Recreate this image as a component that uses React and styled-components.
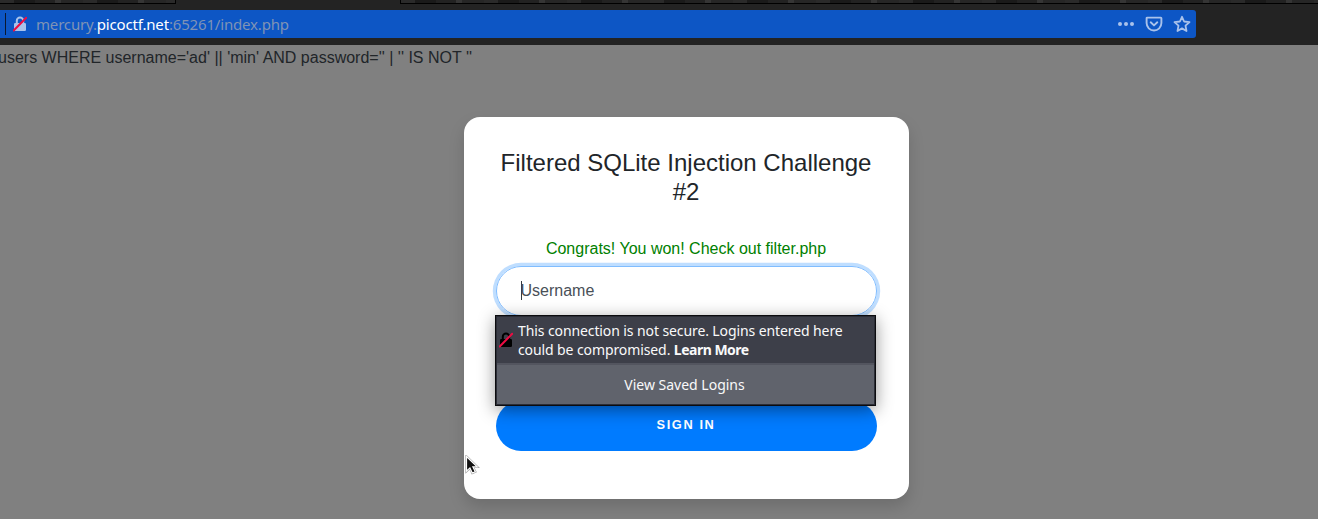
import React from "react";
import styled, { createGlobalStyle } from "styled-components";

const GlobalStyle = createGlobalStyle`
  * { box-sizing: border-box; }
  body {
    margin: 0;
    overflow: hidden;
    background: #808080;
    color: #212529;
    font: 16px/24px "Liberation Sans", Arial, sans-serif;
  }
  #root { height: 519px; }
`;

const Window = styled.div`
  height: 519px;
  display: flex;
  flex-direction: column;
  overflow: hidden;
`;

const TabStrip = styled.div`
  height: 4px;
  flex: none;
  display: flex;
  background: #232323;
`;

const TabGap = styled.div`
  width: ${(p) => p.$width};
  flex: ${(p) => (p.$grow ? 1 : "none")};
  border-bottom: 1px solid #000;
  border-left: ${(p) => (p.$grow ? "1px solid #000" : 0)};
  border-right: ${(p) => (p.$grow ? 0 : "1px solid #000")};
  background: repeating-linear-gradient(
    90deg,
    #2a2a2a 0 14px, #1a1a1a 14px 35px, #222 35px 55px,
    #353535 55px 61px, #262626 61px 83px
  );
`;

const ActiveTab = styled.div`
  width: 224px;
`;

const NavBar = styled.div`
  height: 41px;
  flex: none;
  padding: 6px 122px 7px 0;
  background: #232323;
`;

const UrlBar = styled.div`
  height: 28px;
  display: flex;
  align-items: center;
  padding-right: 5px;
  background: #0d56c5;
  border-radius: 0 3px 3px 0;
`;

const Divider = styled.div`
  width: 1px;
  height: 22px;
  margin: 0 7px 0 5px;
  background: #0b1830;
`;

const Url = styled.div`
  flex: 1;
  margin-left: 9px;
  font: 15px/20px "Noto Sans", sans-serif;
  letter-spacing: -0.17px;
  color: #7f93b5;
`;

const Host = styled.span`
  color: #fff;
`;

const Actions = styled.div`
  display: flex;
  gap: 10px;
  color: #a9c2eb;
`;

const Page = styled.main`
  flex: 1;
  display: flex;
  flex-direction: column;
  align-items: flex-start;
`;

const Query = styled.div`
  height: 25px;
  padding-top: 1px;
  margin-left: -2px;
  white-space: pre;
`;

const Card = styled.section`
  width: 445px;
  height: 382px;
  flex: none;
  margin: 47px 0 0 464px;
  padding: 32px;
  border-radius: 16px;
  background: #fff;
  box-shadow: 0 8px 16px rgba(0, 0, 0, 0.15);
  text-align: center;
`;

const Title = styled.h5`
  margin: 0 0 30px;
  padding-right: 1px;
  font-size: 24px;
  font-weight: 400;
  line-height: 28.8px;
`;

const Message = styled.div`
  height: 24px;
  margin-bottom: 5px;
  padding-right: 1px;
  color: green;
`;

const Field = styled.div`
  position: relative;
  height: 50px;
  display: flex;
  align-items: center;
  padding-left: 24px;
  border: 1px solid #80bdff;
  border-radius: 32px;
  box-shadow: 0 0 0 3.2px rgba(0, 123, 255, 0.25);
  color: #495057;
`;

const Caret = styled.span`
  width: 1px;
  height: 19px;
  margin-right: -1.5px;
  background: #343a40;
`;

const SignIn = styled.button`
  display: block;
  width: 100%;
  height: 50px;
  margin-top: 85px;
  padding: 0 1px 2px 0;
  border: 0;
  border-radius: 80px;
  background: #007bff;
  color: #fff;
  font: bold 12.8px/20px "Liberation Sans", Arial, sans-serif;
  letter-spacing: 1.6px;
`;

const LoginPopup = styled.div`
  position: absolute;
  z-index: 2;
  top: 48px;
  left: -2px;
  width: 381px;
  height: 91px;
  border: 1px solid #0c0c0f;
  box-shadow: 0 4px 16px rgba(0, 0, 0, 0.42);
  background: #2b2d36;
  padding: 1px;
  color: #f9f9fa;
  font: 14px/19px "Noto Sans", sans-serif;
`;

const Warning = styled.div`
  height: 46px;
  display: flex;
  align-items: center;
  padding-left: 2px;
  gap: 5px;
  background: #3d3f49;
  text-align: left;
  white-space: nowrap;
  letter-spacing: -0.1px;
`;

const LearnMore = styled.b`
  letter-spacing: -0.5px;
`;

const SavedLogins = styled.div`
  height: 41px;
  padding-right: 2px;
  border-top: 2px solid #53555f;
  background: #60636c;
  line-height: 40px;
  text-align: center;
`;

const Pointer = styled.svg`
  position: absolute;
  left: 465px;
  top: 455px;
`;

const LockIcon = ({ color }) => (
  <svg width="14" height="16" viewBox="0 0 14 16" fill="none">
    <path d="M3.8 7.5V4.8a3.2 3.2 0 0 1 6.4 0v2.7" stroke={color} strokeWidth="2" />
    <rect x="1" y="7" width="12" height="8" rx="1.2" fill={color} />
    <path d="M.7 14.5 13.2 1.8" stroke="#ed0d43" strokeWidth="2" strokeLinecap="round" />
  </svg>
);

export default function App() {
  return (
    <>
      <GlobalStyle />
      <Window>
        <TabStrip>
          <TabGap $width="176px" />
          <ActiveTab />
          <TabGap $grow />
        </TabStrip>
        <NavBar>
          <UrlBar>
            <Divider />
            <LockIcon color="#a9c2eb" />
            <Url>mercury.<Host>picoctf.net</Host>:65261/index.php</Url>
            <Actions>
              <svg width="18" height="18" viewBox="0 0 18 18" fill="currentColor">
                <circle cx="3" cy="9" r="2" />
                <circle cx="9" cy="9" r="2" />
                <circle cx="15" cy="9" r="2" />
              </svg>
              <svg width="18" height="18" viewBox="0 0 18 18" fill="none" stroke="currentColor" strokeWidth="1.9" strokeLinecap="round" strokeLinejoin="round">
                <path d="M2.2 2.6h13.6a.6.6 0 0 1 .6.6v4.9a7.4 7.4 0 0 1-14.8 0V3.2a.6.6 0 0 1 .6-.6z" />
                <path d="m5.7 7.3 3.3 3.1 3.3-3.1" />
              </svg>
              <svg width="18" height="18" viewBox="0 0 18 18" fill="none" stroke="currentColor" strokeWidth="1.8" strokeLinejoin="round">
                <path d="m9 1.8 2.1 4.7 5.4.6-4 3.6 1 5.3L9 13.4l-4.5 2.6 1-5.3-4-3.6 5.4-.6z" />
              </svg>
            </Actions>
          </UrlBar>
        </NavBar>
        <Page>
          <Query>users WHERE username='ad' || 'min' AND password='' | '' IS NOT ''</Query>
          <Card>
            <Title>Filtered SQLite Injection Challenge #2</Title>
            <Message>Congrats! You won! Check out filter.php</Message>
            <Field>
              <Caret />
              Username
              <LoginPopup>
                <Warning>
                  <LockIcon color="#000" />
                  <div>
                    This connection is not secure. Logins entered here
                    <br />
                    could be compromised. <LearnMore>Learn More</LearnMore>
                  </div>
                </Warning>
                <SavedLogins>View Saved Logins</SavedLogins>
              </LoginPopup>
            </Field>
            <SignIn>SIGN IN</SignIn>
          </Card>
        </Page>
      </Window>
      <Pointer width="15" height="21" viewBox="0 0 15 21">
        <path d="M1.5 1.5v14.6l3.4-3.2 2.4 5.1 3-1.3-2.4-4.8h4.3z" fill="#111" stroke="#999" strokeWidth="2.2" />
        <path d="M1.5 1.5v14.6l3.4-3.2 2.4 5.1 3-1.3-2.4-4.8h4.3z" fill="#111" stroke="#fff" strokeWidth="1.2" />
      </Pointer>
    </>
  );
}
